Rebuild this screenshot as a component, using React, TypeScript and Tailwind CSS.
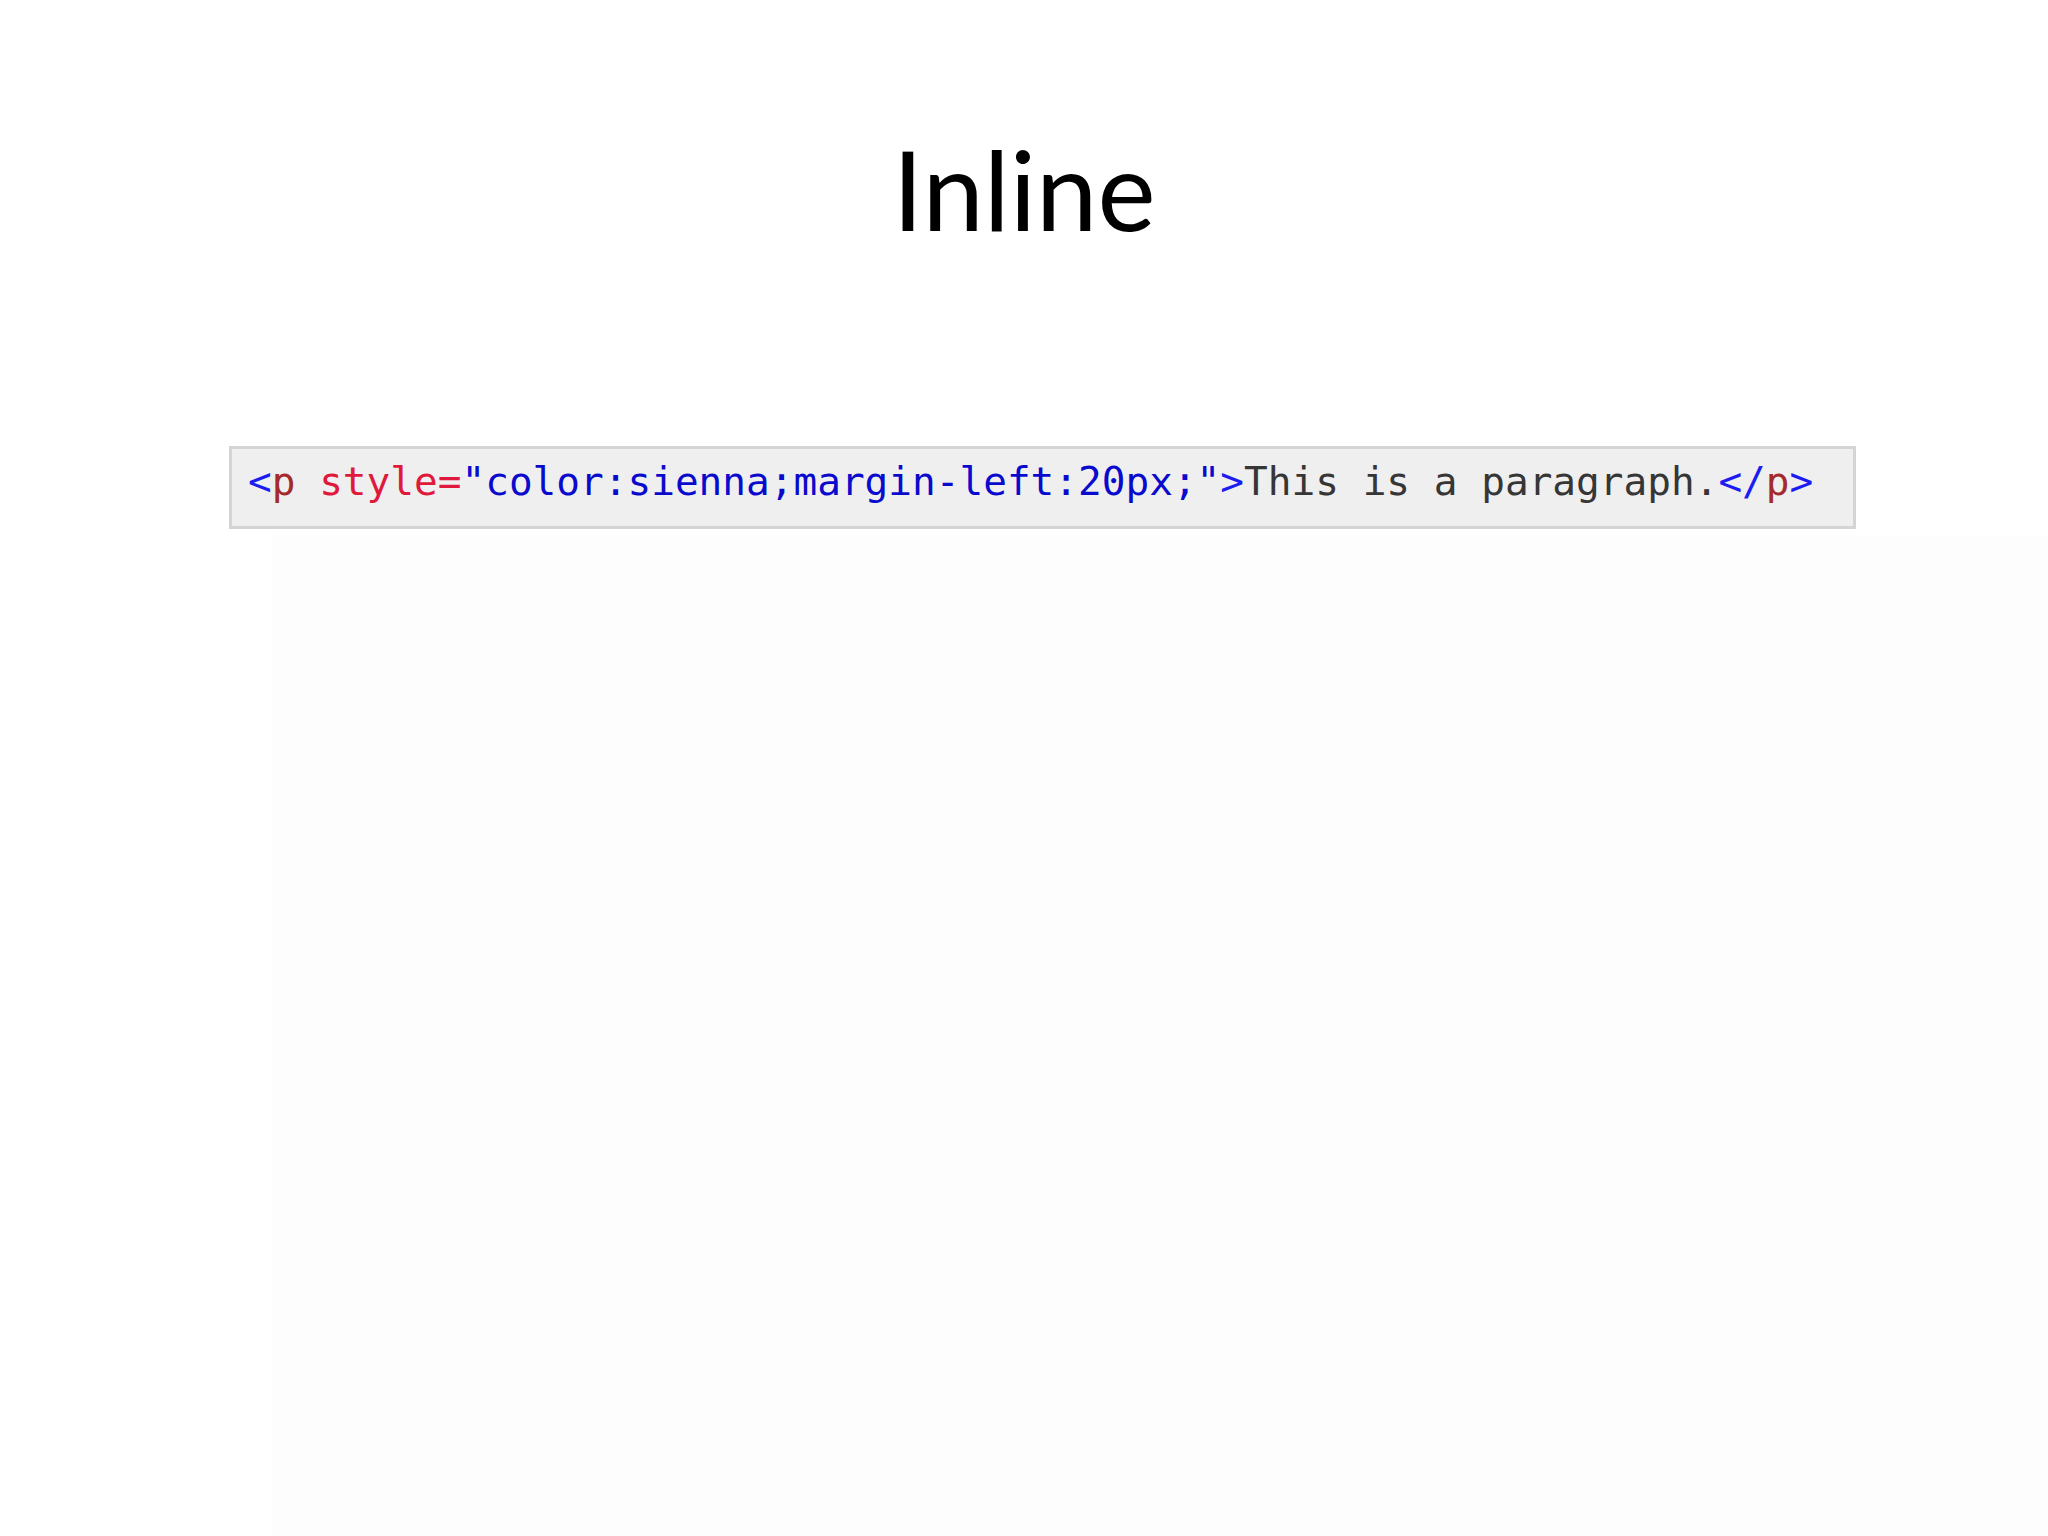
export default function App() {
  return (
    <div className="h-screen flex flex-col bg-white overflow-hidden">
      {/* Slide title */}
      <h1
        className="pt-[133px] text-center text-[110px] leading-none text-black"
        style={{ fontFamily: "Lato, 'Open Sans', sans-serif" }}
      >
        Inline
      </h1>

      {/* Code sample */}
      <div
        className="mt-[203px] ml-[229px] w-[1627px] h-[83px] border-[3px] border-[#d4d4d4] bg-[#efeff0] pl-[16px] pt-[13px] text-[39.4px] leading-none whitespace-pre"
        style={{ fontFamily: "'DejaVu Sans Mono', 'Liberation Mono', monospace" }}
      >
        <span className="text-[#1c1cf0]">&lt;</span>
        <span className="text-[#a52a2a]">p</span>
        <span className="text-[#e0183c]"> style=</span>
        <span className="text-[#0a0acd]">"color:sienna;margin-left:20px;"</span>
        <span className="text-[#1c1cf0]">&gt;</span>
        <span className="text-[#363636]">This is a paragraph.</span>
        <span className="text-[#1c1cf0]">&lt;/</span>
        <span className="text-[#a52a2a]">p</span>
        <span className="text-[#1c1cf0]">&gt;</span>
      </div>

      {/* faint backdrop of the slide body */}
      <div className="flex-1 mt-[6px] ml-[272px] bg-[#fdfdfd]" />
    </div>
  );
}
